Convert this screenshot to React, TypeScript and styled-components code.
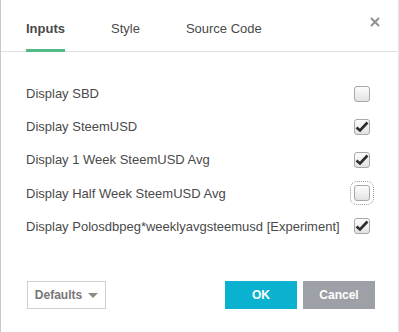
import { JSX, useState } from "react";
import styled, { createGlobalStyle } from "styled-components";

const GlobalStyle = createGlobalStyle`
  html, body {
    margin: 0;
    padding: 0;
    background: #ffffff;
  }
  body {
    font-family: "Liberation Sans", Arial, sans-serif;
  }
`;

const Dialog = styled.div`
  box-sizing: border-box;
  width: 399px;
  height: 332px;
  background: #fff;
  border-left: 1px solid #c9c9c9;
  border-right: 1px solid #e6e6e6;
  display: flex;
  flex-direction: column;
  position: relative;
`;

const Header = styled.div`
  display: flex;
  align-items: flex-end;
  height: 52px;
  padding-left: 25px;
  border-bottom: 1px solid #e0e0e0;
  box-sizing: border-box;
`;

const Tab = styled.div<{ active?: boolean }>`
  font-size: 13px;
  color: #4a4a4a;
  font-weight: ${(p) => (p.active ? "bold" : "normal")};
  padding-bottom: 13px;
  margin-right: 46px;
  border-bottom: 3px solid ${(p) => (p.active ? "#53b987" : "transparent")};
  margin-bottom: -1px;
`;

const Close = styled.button`
  position: absolute;
  top: 15px;
  right: 16px;
  width: 14px;
  height: 14px;
  padding: 0;
  border: none;
  background: none;
  cursor: pointer;
`;

const Body = styled.div`
  flex: 1;
  padding: 25px 26px 0 25px;
  display: flex;
  flex-direction: column;
`;

const Row = styled.label`
  display: flex;
  align-items: center;
  justify-content: space-between;
  height: 33.2px;
  font-size: 13px;
  color: #4a4a4a;
`;

const Box = styled.span<{ focused?: boolean }>`
  width: 14px;
  height: 14px;
  border: 1px solid #a8a8a8;
  border-radius: 3px;
  background: linear-gradient(#fdfdfd, #e2e2e2);
  display: flex;
  align-items: center;
  justify-content: center;
  margin-right: 2px;
  outline: ${(p) => (p.focused ? "1px dotted #9a9a9a" : "none")};
  outline-offset: 3px;
`;

const Footer = styled.div`
  display: flex;
  align-items: center;
  padding: 0 23px 23px 26px;
`;

const Defaults = styled.button`
  box-sizing: border-box;
  height: 28px;
  width: 79px;
  border: 1px solid #cfcfcf;
  background: #fff;
  font-family: inherit;
  font-size: 12px;
  font-weight: bold;
  color: #777;
  display: flex;
  align-items: center;
  justify-content: center;
  gap: 6px;
  padding: 0;
`;

const Caret = styled.span`
  width: 0;
  height: 0;
  border-left: 5px solid transparent;
  border-right: 5px solid transparent;
  border-top: 5px solid #8a8a8a;
  margin-top: 1px;
`;

const Spacer = styled.div`
  flex: 1;
`;

const ActionButton = styled.button<{ bg: string }>`
  width: 72px;
  height: 28px;
  border: none;
  background: ${(p) => p.bg};
  color: #fff;
  font-family: inherit;
  font-size: 12px;
  font-weight: bold;
  margin-left: 6px;
  padding: 0;
`;

const items = [
  { label: "Display SBD", checked: false },
  { label: "Display SteemUSD", checked: true },
  { label: "Display 1 Week SteemUSD Avg", checked: true },
  { label: "Display Half Week SteemUSD Avg", checked: false, focused: true },
  { label: "Display Polosdbpeg*weeklyavgsteemusd [Experiment]", checked: true },
];

function Check(): JSX.Element {
  return (
    <svg width="14" height="12" viewBox="0 0 14 12">
      <path d="M1.5 6.5 L5 9.5 L12.5 1.5" fill="none" stroke="#2d2d2d" strokeWidth="2.6" />
    </svg>
  );
}

export default function App(): JSX.Element {
  const [values, setValues] = useState(items.map((i) => i.checked));

  return (
    <>
      <GlobalStyle />
      <Dialog>
        <Header>
          <Tab active>Inputs</Tab>
          <Tab>Style</Tab>
          <Tab>Source Code</Tab>
        </Header>
        <Close aria-label="close">
          <svg width="14" height="14" viewBox="0 0 14 14">
            <path d="M3 3 L11 11 M11 3 L3 11" stroke="#8f9196" strokeWidth="2" />
          </svg>
        </Close>
        <Body>
          {items.map((item, i) => (
            <Row
              key={item.label}
              onClick={() => setValues((v) => v.map((x, j) => (j === i ? !x : x)))}
            >
              {item.label}
              <Box focused={item.focused}>{values[i] && <Check />}</Box>
            </Row>
          ))}
        </Body>
        <Footer>
          <Defaults>
            Defaults <Caret />
          </Defaults>
          <Spacer />
          <ActionButton bg="#0ab2cf">OK</ActionButton>
          <ActionButton bg="#9da0a6">Cancel</ActionButton>
        </Footer>
      </Dialog>
    </>
  );
}
